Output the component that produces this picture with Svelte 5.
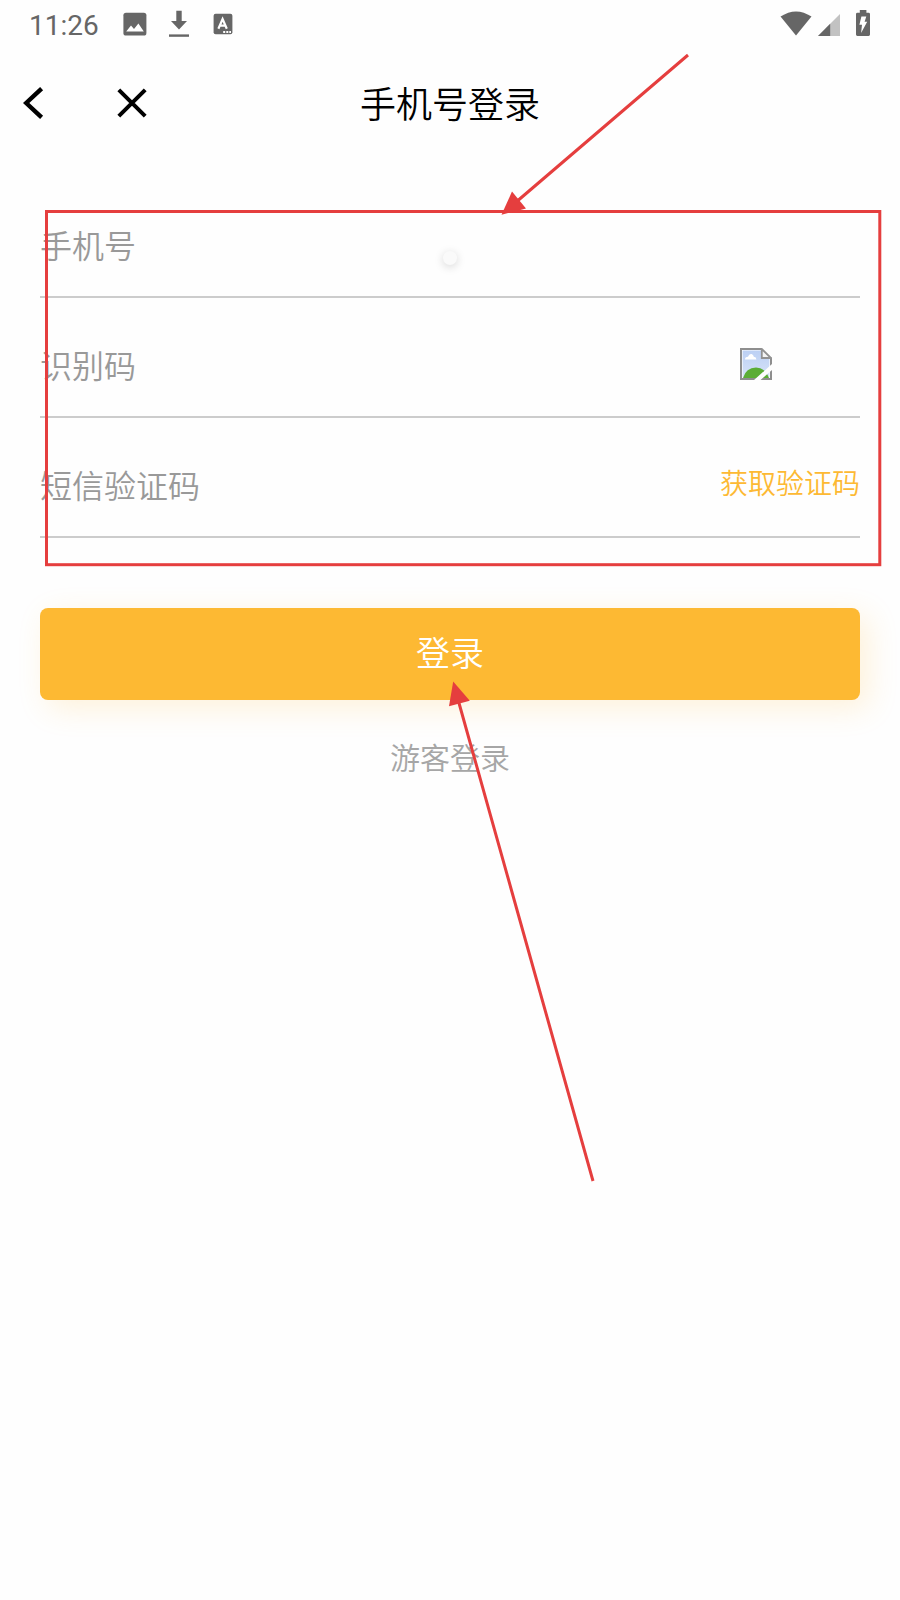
<script lang="ts">
    interface Field {
        id: string;
        label: string;
        extra?: 'captcha' | 'sms';
    }

    const fields: Field[] = [
        { id: 'phone', label: '手机号' },
        { id: 'captcha', label: '识别码', extra: 'captcha' },
        { id: 'sms', label: '短信验证码', extra: 'sms' }
    ];
</script>

<div class="screen">
    <div class="status-bar">
        <span class="time">11:26</span>
        <!-- gallery -->
        <svg class="gallery" width="24" height="24" viewBox="0 0 24 24">
            <rect x="0.4" y="0.7" width="23" height="22.8" rx="2.6" fill="#666" />
            <path d="M3.2 19.4 L8 13.4 L11 17 L15.4 11.6 L20.8 19.4 Z" fill="#fff" />
        </svg>
        <!-- download -->
        <svg class="download" width="20" height="28" viewBox="0 0 20 28">
            <path d="M7.3 0.8 H12.7 V11 H18 L10 19.6 L2 11 H7.3 Z" fill="#666" />
            <rect x="0" y="24.4" width="20" height="2.4" fill="#666" />
        </svg>
        <!-- input method -->
        <svg class="keyboard" width="20" height="22" viewBox="0 0 20 22">
            <rect x="0.6" y="0.8" width="18.8" height="20.4" rx="2" fill="#666" />
            <path d="M5.4 15.8 L9.6 6 L13.8 15.8 M6.9 12.6 H12.3" fill="none" stroke="#fff" stroke-width="2.2" />
            <path d="M10.2 19 H12.2 M13.3 19 H15.3 M16.3 19 H18" stroke="#fff" stroke-width="1.8" />
        </svg>
        <div class="system">
            <svg width="32" height="25" viewBox="0 0 32 25">
                <path d="M0.5 5.6 Q16 -4.8 31.5 5.6 L16 24.6 Z" fill="#666" />
            </svg>
            <svg class="signal" width="22" height="22" viewBox="0 0 22 22">
                <path d="M0 22 L22 0 V22 Z" fill="#c2c2c2" />
                <path d="M0 22 L12.2 9.8 V22 Z" fill="#666" />
            </svg>
            <svg class="battery" width="14" height="26" viewBox="0 0 14 26">
                <path d="M3.8 0 H10.4 V2.8 H12.6 Q14 2.8 14 4.2 V24.6 Q14 26 12.6 26 H1.4 Q0 26 0 24.6 V4.2 Q0 2.8 1.4 2.8 H3.8 Z" fill="#666" />
                <path d="M5.4 6.5 H10.3 L8.6 11.8 H11.2 L5.1 23 L6 14.8 H3.4 Z" fill="#fff" />
            </svg>
        </div>
    </div>

    <div class="nav-bar">
        <div class="nav-buttons">
            <svg width="21" height="32" viewBox="0 0 21 32">
                <path d="M18.6 1.6 L3.2 16 L18.6 30.4" fill="none" stroke="#000" stroke-width="4.4" />
            </svg>
            <svg width="30" height="30" viewBox="0 0 30 30">
                <path d="M1.8 1.8 L28.2 28.2 M28.2 1.8 L1.8 28.2" stroke="#000" stroke-width="4" />
            </svg>
        </div>
        <div class="title">手机号登录</div>
    </div>

    <div class="form">
        {#each fields as field (field.id)}
            <div class="field">
                <span class="label">{field.label}</span>
                {#if field.extra === 'captcha'}
                    <!-- captcha image that failed to load -->
                    <svg class="captcha" width="32" height="32" viewBox="0 0 32 32">
                        <defs>
                            <linearGradient id="sky" x1="0" y1="0" x2="0" y2="1">
                                <stop offset="0" stop-color="#bcd0f4" />
                                <stop offset="1" stop-color="#d6e2f8" />
                            </linearGradient>
                            <clipPath id="paper">
                                <path d="M0 0 H22 L32 10 V16 L14 32 H0 Z M20.5 32 L32 22 V32 Z" />
                            </clipPath>
                        </defs>
                        <g clip-path="url(#paper)">
                            <path d="M1 1 H22 L31 10 V31 H1 Z" fill="#fff" />
                            <path d="M2.6 2.6 H21 V11 H29.4 V29.4 H2.6 Z" fill="url(#sky)" />
                            <path d="M5 11.5 Q5 9 8 8.8 Q9 5.6 11.5 6 Q13.5 6.4 13.8 8.8 Q16.4 9 16.4 11.5 Z" fill="#fff" />
                            <path d="M3 30 Q6 19.5 16 19.5 Q25 19.5 29 30 Z" fill="#5bad35" />
                            <path d="M1 0 V32 M0 1 H22 M0 31 H32 M31 9 V32" stroke="#8e8e8e" stroke-width="2" />
                        </g>
                        <path d="M21.8 1 L31 10 H21.8 Z" fill="#f4f4f4" stroke="#929292" stroke-width="1.8" />
                    </svg>
                {:else if field.extra === 'sms'}
                    <span class="send-code">获取验证码</span>
                {/if}
            </div>
        {/each}

        <button class="login">登录</button>
        <div class="guest">游客登录</div>
    </div>

    <div class="touch-dot"></div>

    <!-- red marks over the page -->
    <svg class="marks" width="900" height="1600" viewBox="0 0 900 1600">
        <rect x="46.5" y="211.5" width="833.3" height="353.2" />
        <path d="M688 55 L515 203 M593 1181 L457.3 697" />
        <path class="head" d="M501.5 214.8 L512 191.5 L526 208.5 Z" />
        <path class="head" d="M453.2 681.5 L449 706.3 L469.8 700.7 Z" />
    </svg>
</div>

<style>
    :global(body) {
        margin: 0;
        background: #fefefe;
    }

    .screen {
        position: relative;
        width: 900px;
        height: 1600px;
        overflow: hidden;
        font-family: 'Noto Sans CJK SC', sans-serif;
        font-weight: 350;
    }

    svg {
        display: block;
        flex: none;
    }

    /* Status bar */
    .status-bar {
        display: flex;
        align-items: center;
        height: 48px;
        padding: 0 30px 0 29px;
        box-sizing: border-box;
    }

    .time {
        width: 94px;
        font-family: Roboto, sans-serif;
        font-size: 28px;
        font-weight: 400;
        line-height: 48px;
        color: #666;
        padding-top: 3px;
    }

    .download {
        margin-left: 22px;
    }

    .keyboard {
        margin-left: 24px;
    }

    .system {
        display: flex;
        align-items: flex-end;
        margin-left: auto;
        height: 26px;
        margin-bottom: 2px;
    }

    .signal {
        margin-left: 6px;
    }

    .battery {
        margin-left: 16px;
    }

    /* Navigation bar */
    .nav-bar {
        display: grid;
        grid-template-columns: 1fr auto 1fr;
        align-items: center;
        height: 110px;
        padding: 0 23px;
    }

    .nav-buttons {
        display: flex;
        align-items: center;
        gap: 73px;
    }

    .title {
        margin-bottom: 2px;
        font-size: 36px;
        line-height: 48px;
        color: #000;
    }

    /* Form */
    .form {
        padding: 20px 40px 0;
    }

    .field {
        display: flex;
        align-items: center;
        justify-content: space-between;
        height: 120px;
        padding-top: 14px;
        box-sizing: border-box;
        border-bottom: 2px solid #ccc;
    }

    .label {
        font-size: 32px;
        line-height: 44px;
        color: #999;
    }

    .captcha {
        margin-right: 88px;
    }

    .send-code {
        font-size: 28px;
        line-height: 40px;
        margin-bottom: 5px;
        color: #fdb933;
    }

    .login {
        display: block;
        width: 100%;
        height: 92px;
        margin-top: 70px;
        padding: 0 0 6px;
        border: none;
        border-radius: 8px;
        background: #fdb933;
        box-shadow: 8px 8px 30px rgba(253, 185, 51, 0.18);
        font-family: inherit;
        font-size: 34px;
        font-weight: inherit;
        color: #fff;
    }

    .guest {
        margin-top: 35px;
        font-size: 30px;
        line-height: 42px;
        text-align: center;
        color: #a6a6a6;
    }

    .touch-dot {
        position: absolute;
        left: 443px;
        top: 251px;
        width: 14px;
        height: 14px;
        border-radius: 50%;
        background: #fafafa;
        box-shadow: 0 2px 10px rgba(0, 0, 0, 0.16);
    }

    .marks {
        position: absolute;
        left: 0;
        top: 0;
        fill: none;
        stroke: #e53e3e;
        stroke-width: 3;
        pointer-events: none;
    }

    .head {
        fill: #e53e3e;
        stroke: none;
    }
</style>
